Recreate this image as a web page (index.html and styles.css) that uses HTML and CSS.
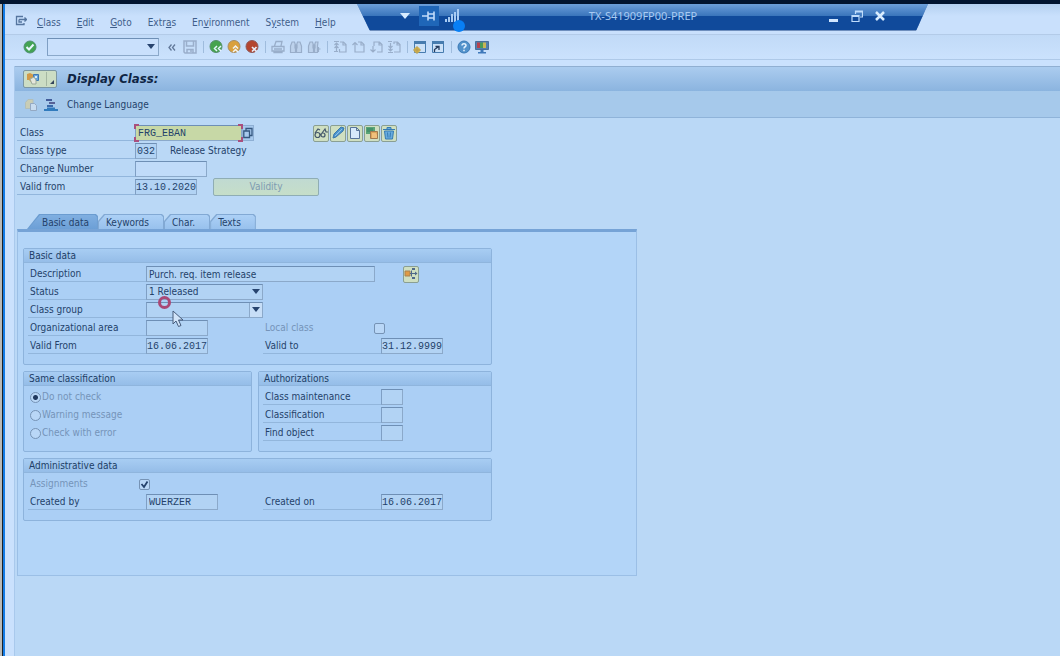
FILE: index.html
```html
<!DOCTYPE html>
<html lang="en">
<head>
<meta charset="utf-8">
<title>Display Class</title>
<link rel="stylesheet" href="styles.css">
</head>
<body>
<div class="top-edge"></div>
<div class="window">
  <nav class="menu">
    <svg class="menu-icon" width="12" height="12" viewBox="0 0 12 12" fill="none" stroke="#55759f" stroke-width="1.300"><path d="M8 1.500H1.500v8H9V8M4 4.500h7.500M9.500 2.500l2 2-2 2M4 4.500v2.500h3"/></svg>
    <a href="#"><u>C</u>lass</a><a href="#"><u>E</u>dit</a><a href="#"><u>G</u>oto</a><a href="#">Extr<u>a</u>s</a><a href="#">En<u>v</u>ironment</a><a href="#">S<u>y</u>stem</a><a href="#"><u>H</u>elp</a>
  </nav>

  <div class="toolbar">
    <button class="ico" aria-label="Enter"><svg viewBox="0 0 14 14"><circle cx="7" cy="7" r="6" fill="#43a354" stroke="#4f8f73"/><path d="M3.500 7l2.500 2.500 4.500-5" fill="none" stroke="#e8f7ff" stroke-width="2"/></svg></button>
    <span class="combo command"><input class="field" type="text" aria-label="Command"><svg class="arrow" viewBox="0 0 8 5"><path d="M0 0h8L4 5z"/></svg></span>
    <button class="ico" aria-label="Collapse"><svg viewBox="0 0 14 14" fill="none" stroke="#62799a" stroke-width="1.300"><path d="M6.500 4.500L4 7.500l2.500 3M10 4.500L7.500 7.500l2.500 3"/></svg></button>
    <button class="ico" aria-label="Save"><svg viewBox="0 0 14 14" fill="none" stroke="#9aaecb" stroke-width="1.500"><path d="M1 1h12v12H2l-1-1zM3.500 1v5h7V1M4 13V9.500h6V13M8 10v2"/></svg></button>
    <i class="sep"></i>
    <button class="ico" aria-label="Back"><svg viewBox="0 0 14 14"><circle cx="7" cy="6.500" r="6" fill="#46a34e" stroke="#568e6c"/><path d="M8 6L5.500 8.500 8 11M12 6L9.500 8.500 12 11" fill="none" stroke="#e6f4ff" stroke-width="1.500"/></svg></button>
    <button class="ico" aria-label="Exit"><svg viewBox="0 0 14 14"><circle cx="7" cy="6.500" r="6" fill="#d9a03d" stroke="#a78d62"/><path d="M6 8.500L8.500 6 11 8.500M6 12l2.500-2.500L11 12" fill="none" stroke="#f1f4f4" stroke-width="1.500"/></svg></button>
    <button class="ico" aria-label="Cancel"><svg viewBox="0 0 14 14"><circle cx="7" cy="6.500" r="6" fill="#b4452f" stroke="#8f5a5b"/><path d="M7 7l4.500 4.500M11.500 7L7 11.500" stroke="#e8eefa" stroke-width="1.700"/></svg></button>
    <i class="sep"></i>
    <button class="ico" aria-label="Print"><svg viewBox="0 0 14 14" fill="none" stroke="#99aeca" stroke-width="1.300"><path d="M3.500 6L5 1.500h6L10 6M1 6.500h12V11H1zM3 9h8M3 11v1.500h8V11"/></svg></button>
    <button class="ico" aria-label="Find"><svg viewBox="0 0 14 14" fill="#bdd2ec" stroke="#99aeca" stroke-width="1.200"><path d="M3 2h2.500l1 3v7.500H1.500V6zM11 2H8.500l-1 3v7.500h5V6zM6 5h2v3H6z"/></svg></button>
    <button class="ico" aria-label="Find next"><svg viewBox="0 0 14 14" fill="#bdd2ec" stroke="#99aeca" stroke-width="1.200"><path d="M3 2h2.500l1 3v7.500H1.500V6zM11 2H8.500l-1 3v7.500h3V6zM6 5h2v3H6z"/><path d="M10 9h3.500M11.500 7v5"/></svg></button>
    <i class="sep"></i>
    <button class="ico" aria-label="First page"><svg viewBox="0 0 14 14" fill="none" stroke="#99aeca" stroke-width="1.200"><path d="M7 2h3.500L13 4.500V12H6.500V9M10 2v3h3M1 1.500h5M3.500 11V3M1.500 5l2-2 2 2M1.500 8l2-2 2 2M1 11.500h4"/></svg></button>
    <button class="ico" aria-label="Previous page"><svg viewBox="0 0 14 14" fill="none" stroke="#99aeca" stroke-width="1.200"><path d="M7 2h3.500L13 4.500V12H4V3M10 2v3h3M1.500 5L4 2.500 6.500 5"/></svg></button>
    <button class="ico" aria-label="Next page"><svg viewBox="0 0 14 14" fill="none" stroke="#99aeca" stroke-width="1.200"><path d="M5 6V2h5.500L13 4.500V12H8M10 2v3h3M4 6v6M1.500 9.500L4 12l2.500-2.500"/></svg></button>
    <button class="ico" aria-label="Last page"><svg viewBox="0 0 14 14" fill="none" stroke="#99aeca" stroke-width="1.200"><path d="M7 4V2h3.500L13 4.500V12H7M10 2v3h3M1 1.500h4M3.500 3v8M1.500 9l2 2 2-2M1.500 6l2 2 2-2M1 12.500h5"/></svg></button>
    <i class="sep"></i>
    <button class="ico" aria-label="New session"><svg viewBox="0 0 14 14"><path d="M1.500 1.500h11v11h-11z" fill="#cbe1f8" stroke="#477caf"/><path d="M1 1h12v3H1z" fill="#477caf"/><circle cx="4" cy="10" r="3" fill="#d6b34a"/><path d="M4 6v8M0 10h8" stroke="#b59c53"/></svg></button>
    <button class="ico" aria-label="Create shortcut"><svg viewBox="0 0 14 14"><path d="M1.500 1.500h11v11h-11z" fill="#cbe1f8" stroke="#477caf"/><path d="M1 1h12v3H1z" fill="#477caf"/><path d="M3.500 12V9.500L7 7M4.500 6.500H8V10" fill="none" stroke="#253a5c" stroke-width="1.300"/></svg></button>
    <i class="sep"></i>
    <button class="ico" aria-label="Help"><svg viewBox="0 0 14 14"><circle cx="7" cy="7" r="6" fill="#5292cb" stroke="#3979b6"/><path d="M5 5.500C5 3 9 3 9 5.500 9 7 7 6.500 7 8.500M7 9.800v1.400" fill="none" stroke="#e4f2ff" stroke-width="1.500"/></svg></button>
    <button class="ico" aria-label="Customize layout"><svg viewBox="0 0 14 14"><path d="M.5 1.500h13v8H.5z" fill="#537fae" stroke="#496f9d"/><path d="M2 2.500h3V8H2z" fill="#b6414e"/><path d="M5 2.500h3V8H5z" fill="#4b9b58"/><path d="M8 2.500h3V8H8z" fill="#c9b556"/><path d="M5.500 10h3v2H11v1.500H3V12h2.500z" fill="#3f79ba"/></svg></button>
  </div>

  <main class="screen">
    <header class="title-bar">
      <button class="services" aria-label="Services for object"><svg width="32" height="16" viewBox="0 0 32 16"><path d="M3 3l3-1 4 2v4l-3 3-2-2H3z" fill="#d29a48"/><path d="M9.500 3.500h5v6h-5z" fill="#67a5dc" stroke="#3c78b4"/><path d="M11 5h2v2h-2z" fill="#d8ecfa"/><path d="M6 8l4-2 2 3v4H8z" fill="#e5e7dc" stroke="#9ba99a"/><path d="M22.500 1v14" stroke="#a5b7a2"/><path d="M30 9v4h-4z" fill="#34455c"/></svg></button>
      <h1>Display Class:</h1>
    </header>
    <div class="app-bar">
      <button class="ico" aria-label="Other class"><svg viewBox="0 0 14 14"><path d="M1.500 4.500L4 1.500h5v9H1.500z" fill="#c9cdb5" stroke="#b2bfb9"/><path d="M6.500 5.500h4l2 2v5h-6z" fill="#c8dcf0" stroke="#94a9c3"/></svg></button>
      <button class="ico" aria-label="Hierarchy"><svg viewBox="0 0 14 14" stroke-width="2"><path d="M2 2h6" stroke="#425c9a"/><path d="M5 5h6" stroke="#586296"/><path d="M3 8h6" stroke="#3a6aab"/><path d="M0 12h14M3 10.500h8" stroke="#317bbd"/></svg></button>
      <button class="text-button">Change Language</button>
    </div>

    <form class="content">
      <section class="key-fields">
        <div class="row">
          <label class="lbl" for="cls">Class</label>
          <span class="focus"><input class="field w-class active mono" id="cls" value="FRG_EBAN"><i class="tl"></i><i class="bl"></i><i class="tr"></i><i class="br"></i></span>
          <button type="button" class="match" aria-label="Search help"><svg width="10" height="12" viewBox="0 0 10 12"><path d="M.8 4h5.700v6.500H.8zM3 3.500V1.500h6v7H7" fill="none" stroke="#35577f" stroke-width="1.300"/></svg></button>
          <div class="actions">
            <button type="button" class="tile" aria-label="Display"><svg viewBox="0 0 14 14" fill="none" stroke="#43566a" stroke-width="1.200"><circle cx="3.500" cy="9" r="2.500"/><circle cx="9" cy="9" r="2"/><path d="M1 7l3-4 2 1M6 9l1-1M8 7l3-4 1 3h2"/></svg></button>
            <button type="button" class="tile" aria-label="Change"><svg viewBox="0 0 14 14"><path d="M2 12l1-4 7-7 3 1-1 3-7 6z" fill="#4b94ce" stroke="#3b79ad"/><path d="M4 10l7-7" stroke="#8fc0e6"/></svg></button>
            <button type="button" class="tile" aria-label="Create"><svg viewBox="0 0 14 14" fill="#d6e9fb" stroke="#56739b"><path d="M2.500 1.500h6l3 3v8h-9zM8.500 1.500v3h3"/></svg></button>
            <button type="button" class="tile" aria-label="Copy"><svg viewBox="0 0 14 14"><path d="M1 1h9v7H1z" fill="#59a477"/><path d="M2 3h6M2 5h6" stroke="#347f60"/><path d="M5.500 5.500h7v7h-7z" fill="#dca65b" stroke="#a37a50"/><path d="M7 7h4l1 2v3H7z" fill="#f0c07c"/></svg></button>
            <button type="button" class="tile" aria-label="Delete"><svg viewBox="0 0 14 14" fill="#68acdf" stroke="#347bb3"><path d="M2.500 5h9l-1 8h-7zM1 3.500h12M5 3V1.500h4V3M5.500 6.500l.5 5M8.500 6.500l-.5 5"/></svg></button>
          </div>
        </div>
        <div class="row">
          <label class="lbl" for="ctype">Class type</label>
          <input class="field w-type ro mono" id="ctype" value="032" readonly>
          <output class="type-name">Release Strategy</output>
        </div>
        <div class="row">
          <label class="lbl" for="chg">Change Number</label>
          <input class="field w-change" id="chg">
        </div>
        <div class="row">
          <label class="lbl" for="vfrom">Valid from</label>
          <input class="field w-date ro mono" id="vfrom" value="13.10.2020">
          <button type="button" class="validity" disabled>Validity</button>
        </div>
      </section>

      <div class="tabs" role="tablist">
        <button type="button" role="tab" aria-selected="true" class="tab selected"><span>Basic data</span></button>
        <button type="button" role="tab" class="tab"><span>Keywords</span></button>
        <button type="button" role="tab" class="tab"><span>Char.</span></button>
        <button type="button" role="tab" class="tab"><span>Texts</span></button>
      </div>

      <div class="panel">
        <section class="group">
          <h2>Basic data</h2>
          <div class="rows">
            <div class="row"><label class="lbl" for="desc">Description</label><input class="field w-desc ro" id="desc" value="Purch. req. item release" readonly>
              <button type="button" class="tile object" aria-label="Where used"><svg viewBox="0 0 14 14"><path d="M1 4h5v5H1z" fill="#e09a45" stroke="#a78253"/><path d="M6 6.500h5M7.500 3.500v6" stroke="#50698a" fill="none"/><path d="M11 4.500l2.500 2L11 8.500zM8 1h3v2H8zM8 10h3v2H8z" fill="#50698a"/></svg></button></div>
            <div class="row"><label class="lbl" for="status">Status</label><span class="combo"><select class="field w-select ro" id="status"><option>1 Released</option></select><svg class="arrow" viewBox="0 0 8 5"><path d="M0 0h8L4 5z"/></svg></span></div>
            <div class="row"><label class="lbl" for="grp">Class group</label><span class="combo boxed"><select class="field w-select ro" id="grp"><option></option></select><svg class="arrow" viewBox="0 0 8 5"><path d="M0 0h8L4 5z"/></svg></span></div>
            <div class="row split"><label class="lbl" for="org">Organizational area</label><span class="cell"><input class="field w-date ro" id="org" readonly></span><label class="lbl dim" for="local">Local class</label><input class="check" type="checkbox" id="local" disabled></div>
            <div class="row"><label class="lbl" for="vf">Valid From</label><span class="cell"><input class="field w-date ro mono" id="vf" value="16.06.2017" readonly></span><label class="lbl" for="vt">Valid to</label><input class="field w-date ro mono" id="vt" value="31.12.9999" readonly></div>
          </div>
        </section>

        <div class="pair">
          <section class="group">
            <h2>Same classification</h2>
            <div class="rows">
              <label class="row choice"><input type="radio" name="same" checked disabled>Do not check</label>
              <label class="row choice"><input type="radio" name="same" disabled>Warning message</label>
              <label class="row choice"><input type="radio" name="same" disabled>Check with error</label>
            </div>
          </section>
          <section class="group">
            <h2>Authorizations</h2>
            <div class="rows">
              <div class="row"><label class="lbl" for="a1">Class maintenance</label><input class="field w-type ro" id="a1" readonly></div>
              <div class="row"><label class="lbl" for="a2">Classification</label><input class="field w-type ro" id="a2" readonly></div>
              <div class="row"><label class="lbl" for="a3">Find object</label><input class="field w-type ro" id="a3" readonly></div>
            </div>
          </section>
        </div>

        <section class="group">
          <h2>Administrative data</h2>
          <div class="rows">
            <div class="row assign"><label class="lbl dim" for="asg">Assignments</label><span class="tick"><input class="check" type="checkbox" id="asg" checked disabled><svg width="11" height="11" viewBox="0 0 11 11"><path d="M2.500 5l2.500 3L8.500 2.500" fill="none" stroke="#24426c" stroke-width="1.800"/></svg></span></div>
            <div class="row"><label class="lbl" for="cb">Created by</label><span class="cell"><input class="field w-change ro mono" id="cb" value="WUERZER" readonly></span><label class="lbl" for="co">Created on</label><input class="field w-date ro mono" id="co" value="16.06.2017" readonly></div>
          </div>
        </section>
      </div>
    </form>
  </main>
</div>

<div class="remote-edge">
  <div class="remote-bar">
    <svg class="r-menu" width="10" height="6" viewBox="0 0 10 6"><path d="M0 0h10L5 6z" fill="#d8ecff"/></svg>
    <button class="pin" aria-label="Pin"><svg width="14" height="12" viewBox="0 0 14 12" fill="none" stroke="#c2dcfa" stroke-width="1.600"><path d="M0 6h6M6 1.500v9M6 4h6M6 8h6M12 1.500v9"/></svg></button>
    <svg class="signal" width="15" height="14" viewBox="0 0 15 14" fill="#a8cbf3"><path d="M0 10h2v3H0zM3 8h2v5H3zM6 5h2v8H6zM9 3h2v10H9zM12 0h2v13h-2z"/></svg>
    <span class="host">TX-S41909FP00-PREP</span>
    <button aria-label="Minimize"><svg width="12" height="12" viewBox="0 0 12 12"><path d="M1 9h9v3H1z" fill="#d2e7ff"/></svg></button>
    <button aria-label="Restore"><svg width="12" height="12" viewBox="0 0 12 12" fill="none" stroke="#bfdcfb" stroke-width="1.200"><path d="M1 5.500h7v6H1zM1 6.500h7M4.500 4V1h7v6H9M4.500 2h7"/></svg></button>
    <button aria-label="Close"><svg width="12" height="12" viewBox="0 0 12 12"><path d="M2 2l8 8M10 2l-8 8" stroke="#d8ecff" stroke-width="2.500"/></svg></button>
  </div>
</div>
<i class="touch-dot"></i>
<i class="click-ring"></i>
<svg class="pointer" width="12" height="18" viewBox="0 0 12 18"><path d="M1 1v13l3-3 2.500 5.500 2.500-1L6.500 10H11z" fill="#d2e5f9" stroke="#465c7c"/></svg>
</body>
</html>
```
FILE: styles.css
```css
* { box-sizing: border-box; }
body {
  margin: 0;
  min-height: 100vh;
  display: flex;
  flex-direction: column;
  background: #bad8f6;
  color: #24426a;
  font: 10px/14px "DejaVu Sans Condensed", "DejaVu Sans", sans-serif;
  overflow-x: hidden;
}
button, input, select { font: inherit; color: inherit; margin: 0; padding: 0; }
button { background: none; border: 0; }
h1, h2 { margin: 0; font-size: inherit; }
svg { display: block; }

.top-edge { height: 4px; background: #021530; }
.window {
  flex: 1;
  display: flex;
  flex-direction: column;
  padding-left: 5px;
  background: linear-gradient(90deg, #b9bab8 0 2px, #1c2228 2px 3px, #127be6 3px 5px, #cae1fd 5px);
}

.menu {
  display: flex;
  align-items: center;
  gap: 16px;
  height: 31px;
  padding: 8px 10px 0;
  background: linear-gradient(#b4d0f0, #c9e0fc 40%);
  border-bottom: 1px solid #b3cbe8;
}
.menu a { color: #3f5e8a; text-decoration: none; }
.menu-icon { margin: -4px -6px 0 0; }

.toolbar {
  display: flex;
  align-items: center;
  gap: 4px;
  height: 25px;
  padding-left: 18px;
  background: linear-gradient(#c1daf7, #cbe2fd);
  border-bottom: 1px solid #aec9e8;
}
.ico { flex: none; width: 14px; height: 14px; }
.ico svg { width: 14px; height: 14px; }
.sep { width: 1px; height: 12px; margin: 0 1px 0 2px; background: #9fbcdd; }
.command { margin: 0 2px 0 6px; }
.command .field { width: 112px; height: 18px; background: #c9e0fc; }

.screen {
  flex: 1;
  margin: 6px 0 0 9px;
  border-left: 1px solid #a9c9ec;
  background: #bad8f6;
}
.title-bar {
  display: flex;
  align-items: center;
  gap: 11px;
  height: 25px;
  padding-left: 9px;
  border-top: 1px solid #90afd2;
  background: linear-gradient(#abccef, #8bb4df);
}
.title-bar h1 { color: #0e2443; font-size: 13px; line-height: 18px; font-style: italic; }
.services { height: 16px; background: #ccddc4; outline: 1px solid #7d97a2; border-radius: 1px; }
.app-bar {
  display: flex;
  align-items: center;
  gap: 6px;
  height: 27px;
  padding: 1px 0 0 9px;
  background: #a6c9eb;
  border-bottom: 1px solid #8fb3d9;
}
.text-button { margin-left: 3px; }

.content { padding: 6px 2px 16px; }
.row { display: flex; align-items: center; height: 18px; }
.lbl {
  flex: none;
  width: 118px;
  height: 16px;
  padding-left: 2px;
  line-height: 16px;
  border-bottom: 1px solid #92b6dc;
}
.dim, .choice { color: #7594b9; }
.dim { border-color: transparent; }
.field {
  display: block;
  height: 16px;
  padding: 0 2px;
  border: 1px solid #8ba9ca;
  border-top-color: #6e8fb5;
  border-left-color: #7f9fc4;
  border-radius: 0;
  background: #c0dbf9;
  outline: 0;
  appearance: none;
}
.ro { background: #b2d3f4; }
.active { background: #c7d8a6; }
.mono { font-family: "Liberation Mono", monospace; }
.w-class { width: 107px; }
.w-type { width: 22px; padding: 0 0 0 1px; }
.w-change { width: 72px; }
.w-date { width: 62px; padding: 0; }
.w-desc { width: 229px; }
.w-select { width: 117px; }
.combo { position: relative; }
.arrow { position: absolute; right: 3px; top: 5px; width: 8px; height: 5px; fill: #27446f; pointer-events: none; }
.command .arrow { right: 4px; top: 6px; }
.boxed::before { content: ""; position: absolute; right: 1px; top: 1px; width: 12px; height: 14px; background: #c7def7; border-left: 1px solid #8ba9ca; }
.cell { width: 117px; }

.key-fields .lbl { padding-left: 3px; }
.focus { position: relative; }
.focus i { position: absolute; width: 5px; height: 5px; border: 0 solid #a94f7e; }
.focus .tl { left: -1px; top: -1px; border-width: 2px 0 0 2px; }
.focus .bl { left: -1px; bottom: -1px; border-width: 0 0 2px 2px; }
.focus .tr { right: -1px; top: -1px; border-width: 2px 2px 0 0; }
.focus .br { right: -1px; bottom: -1px; border-width: 0 2px 2px 0; }
.match { padding: 1px 0; border: 1px solid #8eafd4; background: #a7c9ed; }
.actions { display: flex; gap: 1px; margin-left: 59px; }
.tile {
  width: 16px;
  height: 17px;
  display: grid;
  place-items: center;
  border: 1px solid #8a9f93;
  border-radius: 2px;
  background: #cfdfc1;
}
.tile svg { width: 14px; height: 14px; }
.object { margin-left: 28px; }
.type-name { margin-left: 13px; }
.validity {
  width: 106px;
  height: 18px;
  margin-left: 16px;
  border: 1px solid #8fadb4;
  border-radius: 2px;
  background: linear-gradient(#c0dad2, #c6dec8);
  color: #7f9bb2;
}

.tabs { display: flex; margin-top: 18px; padding-left: 10px; }
.tab {
  position: relative;
  height: 15px;
  padding: 2px 15px 0 8px;
  line-height: 13px;
  background: #82a9d4;
  clip-path: polygon(0 7px, 6px 0, calc(100% - 2px) 0, 100% 2px, 100% 100%, 0 100%);
}
.tab::before {
  content: "";
  position: absolute;
  inset: 1px 1px 0;
  background: linear-gradient(#acd0f6, #98c1ed);
  clip-path: inherit;
}
.tab span { position: relative; }
.tab.selected {
  padding: 2px 9px 0 15px;
  background: #6b9cd0;
  clip-path: polygon(0 100%, 12px 0, calc(100% - 2px) 0, 100% 2px, 100% 100%);
}
.tab.selected::before { background: linear-gradient(#80afe1, #6c9fd6); }
.panel {
  display: flex;
  flex-direction: column;
  gap: 6px;
  max-width: 620px;
  padding: 16px 144px 54px 5px;
  border: 1px solid #9bbfe6;
  border-top: 3px solid #76a3d6;
  background: #b3d5f8;
}
.group { border: 1px solid #8db3dc; border-radius: 2px; background: #abcff5; }
.group h2 {
  height: 14px;
  padding-left: 5px;
  font-weight: normal;
  line-height: 13px;
  color: #203e66;
  background: linear-gradient(#a8cdf3, #95bde8);
  border-bottom: 1px solid #8fb5dd;
}
.rows { padding: 2px 4px 9px; }
.pair { display: grid; grid-template-columns: 229fr 234fr; gap: 6px; }
.check, .choice input {
  display: block;
  appearance: none;
  width: 11px;
  height: 11px;
  border: 1px solid #7693b5;
  border-radius: 2px;
  background: #b9d7f7;
}
.choice { padding-left: 2px; gap: 1px; }
.choice input { border-radius: 50%; }
.choice input:checked { background: radial-gradient(#20395f 0 2px, #b9d7f7 3px); }
.split .lbl.dim { width: 111px; }
.assign .lbl { width: 111px; }
.tick { display: grid; }
.tick > * { grid-area: 1 / 1; }
.tick svg { z-index: 1; pointer-events: none; }

.remote-edge {
  position: absolute;
  top: 4px;
  left: 357px;
  width: 571px;
  height: 27px;
  background: #6f8fbd;
  clip-path: polygon(0 0, 100% 0, calc(100% - 12px) 100%, 13px 100%);
}
.remote-bar {
  display: flex;
  align-items: center;
  gap: 11px;
  height: 26px;
  padding: 0 42px 2px 43px;
  background: linear-gradient(#6c9fda, #3974bb 12px, #104a9b 12px);
}
.remote-bar .pin { margin-left: -2px; padding: 4px 3px; background: #1f66b8; }
.signal { margin-left: -5px; }
.host { flex: 1; padding-right: 2px; text-align: center; color: #a9cbf3; font: 11px/16px "Noto Sans", sans-serif; }
.touch-dot { position: absolute; left: 453px; top: 20px; width: 12px; height: 12px; border-radius: 50%; background: #087ff5; }
.click-ring { position: absolute; left: 158px; top: 296px; width: 13px; height: 13px; border: 3px solid #a94775; border-radius: 50%; }
.pointer { position: absolute; left: 172px; top: 310px; }
```
